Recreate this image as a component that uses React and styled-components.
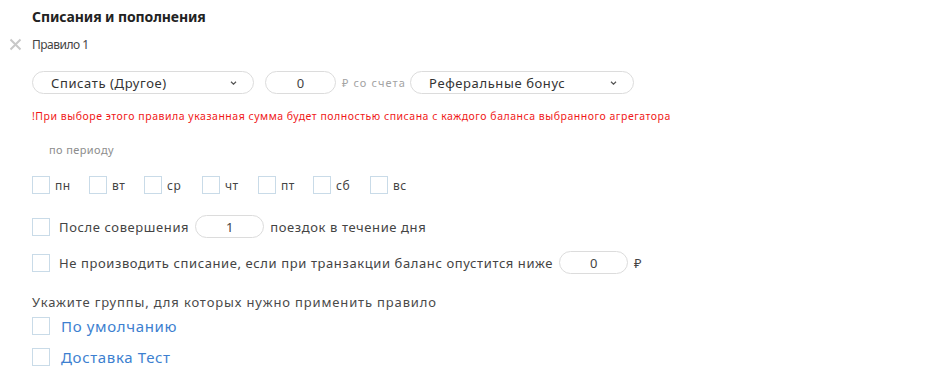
import React from "react";
import styled, { createGlobalStyle } from "styled-components";

const Global = createGlobalStyle`
  html, body { margin: 0; padding: 0; background: #fff; }
  body { font-family: "Noto Sans", "Open Sans", sans-serif; color: #333; }
`;

const Page = styled.div`
  width: 931px;
  height: 378px;
  box-sizing: border-box;
  padding: 8px 0 0 32px;
  display: flex;
  flex-direction: column;
  overflow: hidden;
`;

const Title = styled.h2`
  margin: 0;
  font-size: 14px;
  font-weight: 700;
  letter-spacing: -0.1px;
  line-height: 18px;
  color: #222;
`;

const RuleHead = styled.div`
  display: flex;
  align-items: center;
  margin-top: 9px;
  margin-left: -23px;
  gap: 10px;
  height: 18px;
  font-size: 12px;
  letter-spacing: -0.5px;
  color: #444;
`;

const Row = styled.div`
  display: flex;
  align-items: center;
  margin-top: ${(p) => p.$mt || 0}px;
  gap: ${(p) => p.$gap ?? 6}px;
`;

const Select = styled.div`
  box-sizing: border-box;
  width: ${(p) => p.$w}px;
  height: 23px;
  border: 1px solid #dcdcdc;
  border-radius: 12px;
  display: flex;
  align-items: center;
  justify-content: space-between;
  padding: 0 16px 0 ${(p) => p.$pl || 18}px;
  font-size: 13px;
  letter-spacing: 0.6px;
  color: #333;
  flex-shrink: 0;
`;

const Chevron = () => (
  <svg width="7" height="4" viewBox="0 0 7 4">
    <path d="M1 0.8l2.5 2.4 2.5-2.4" fill="none" stroke="#555" strokeWidth="1.2" />
  </svg>
);

const NumInput = styled.div`
  box-sizing: border-box;
  width: ${(p) => p.$w || 71}px;
  height: 23px;
  border: 1px solid #dcdcdc;
  border-radius: 12px;
  display: flex;
  align-items: center;
  justify-content: center;
  font-size: 13px;
  color: #444;
  flex-shrink: 0;
`;

const Small = styled.span`
  font-size: 11px;
  letter-spacing: 1.1px;
  color: #a3a3a3;
  margin: 0 4px 0 6px;
`;

const Warning = styled.div`
  margin-top: 15px;
  font-size: 10.5px;
  letter-spacing: 0.52px;
  color: #f01818;
  line-height: 14px;
  white-space: nowrap;
`;

const Hint = styled.div`
  margin-top: 20px;
  margin-left: 17px;
  font-size: 11px;
  letter-spacing: 0.4px;
  color: #8d8d8d;
  line-height: 14px;
`;

const Box = styled.span`
  box-sizing: border-box;
  width: 18px;
  height: 18px;
  border: 1px solid #c9dbe8;
  flex-shrink: 0;
`;

const Days = styled.div`
  display: flex;
  margin-top: 19px;
`;

const Day = styled.label`
  display: flex;
  align-items: center;
  gap: 5px;
  width: ${(p) => p.$w}px;
  font-size: 12px;
  letter-spacing: 0.5px;
  color: #444;
`;

const Label = styled.span`
  line-height: 18px;
  white-space: nowrap;
  color: ${(p) => (p.$blue ? "#3d7fd0" : "#444")};
  font-size: ${(p) => (p.$blue ? 15 : 13)}px;
  letter-spacing: ${(p) => (p.$blue ? 0.65 : 0.6)}px;
`;

const Plain = styled.div`
  margin-top: 20px;
  font-size: 13px;
  letter-spacing: 0.85px;
  color: #4a4a4a;
  line-height: 16px;
  white-space: nowrap;
`;

const Cross = () => (
  <svg width="13" height="13" viewBox="0 0 13 13">
    <path d="M1.5 1.5l10 10M11.5 1.5l-10 10" stroke="#c8c8c8" strokeWidth="2" />
  </svg>
);

const days = [
  ["пн", 57],
  ["вт", 55],
  ["ср", 58],
  ["чт", 56],
  ["пт", 55],
  ["сб", 57],
  ["вс", 57],
];

export default function App() {
  return (
    <Page>
      <Global />
      <Title>Списания и пополнения</Title>
      <RuleHead>
        <Cross />
        <span>Правило 1</span>
      </RuleHead>
      <Row $mt={18} $gap={0}>
        <Select $w={222}>
          <span>Списать (Другое)</span>
          <Chevron />
        </Select>
        <NumInput $w={71} style={{ marginLeft: 11 }}>0</NumInput>
        <Small>₽ со счета</Small>
        <Select $w={224} $pl={18}>
          <span>Реферальные бонус</span>
          <Chevron />
        </Select>
      </Row>
      <Warning>!При выборе этого правила указанная сумма будет полностью списана с каждого баланса выбранного агрегатора</Warning>
      <Hint>по периоду</Hint>
      <Days>
        {days.map(([d, w]) => (
          <Day key={d} $w={w}>
            <Box />
            {d}
          </Day>
        ))}
      </Days>
      <Row $mt={21} $gap={6}>
        <Box />
        <Label style={{ marginLeft: 3 }}>После совершения</Label>
        <NumInput $w={69}>1</NumInput>
        <Label>поездок в течение дня</Label>
      </Row>
      <Row $mt={13} $gap={6}>
        <Box />
        <Label style={{ marginLeft: 3 }}>Не производить списание, если при транзакции баланс опустится ниже</Label>
        <NumInput $w={69}>0</NumInput>
        <Label>₽</Label>
      </Row>
      <Plain>Укажите группы, для которых нужно применить правило</Plain>
      <Row $mt={7} $gap={11}>
        <Box />
        <Label $blue>По умолчанию</Label>
      </Row>
      <Row $mt={13} $gap={11}>
        <Box />
        <Label $blue>Доставка Тест</Label>
      </Row>
    </Page>
  );
}
